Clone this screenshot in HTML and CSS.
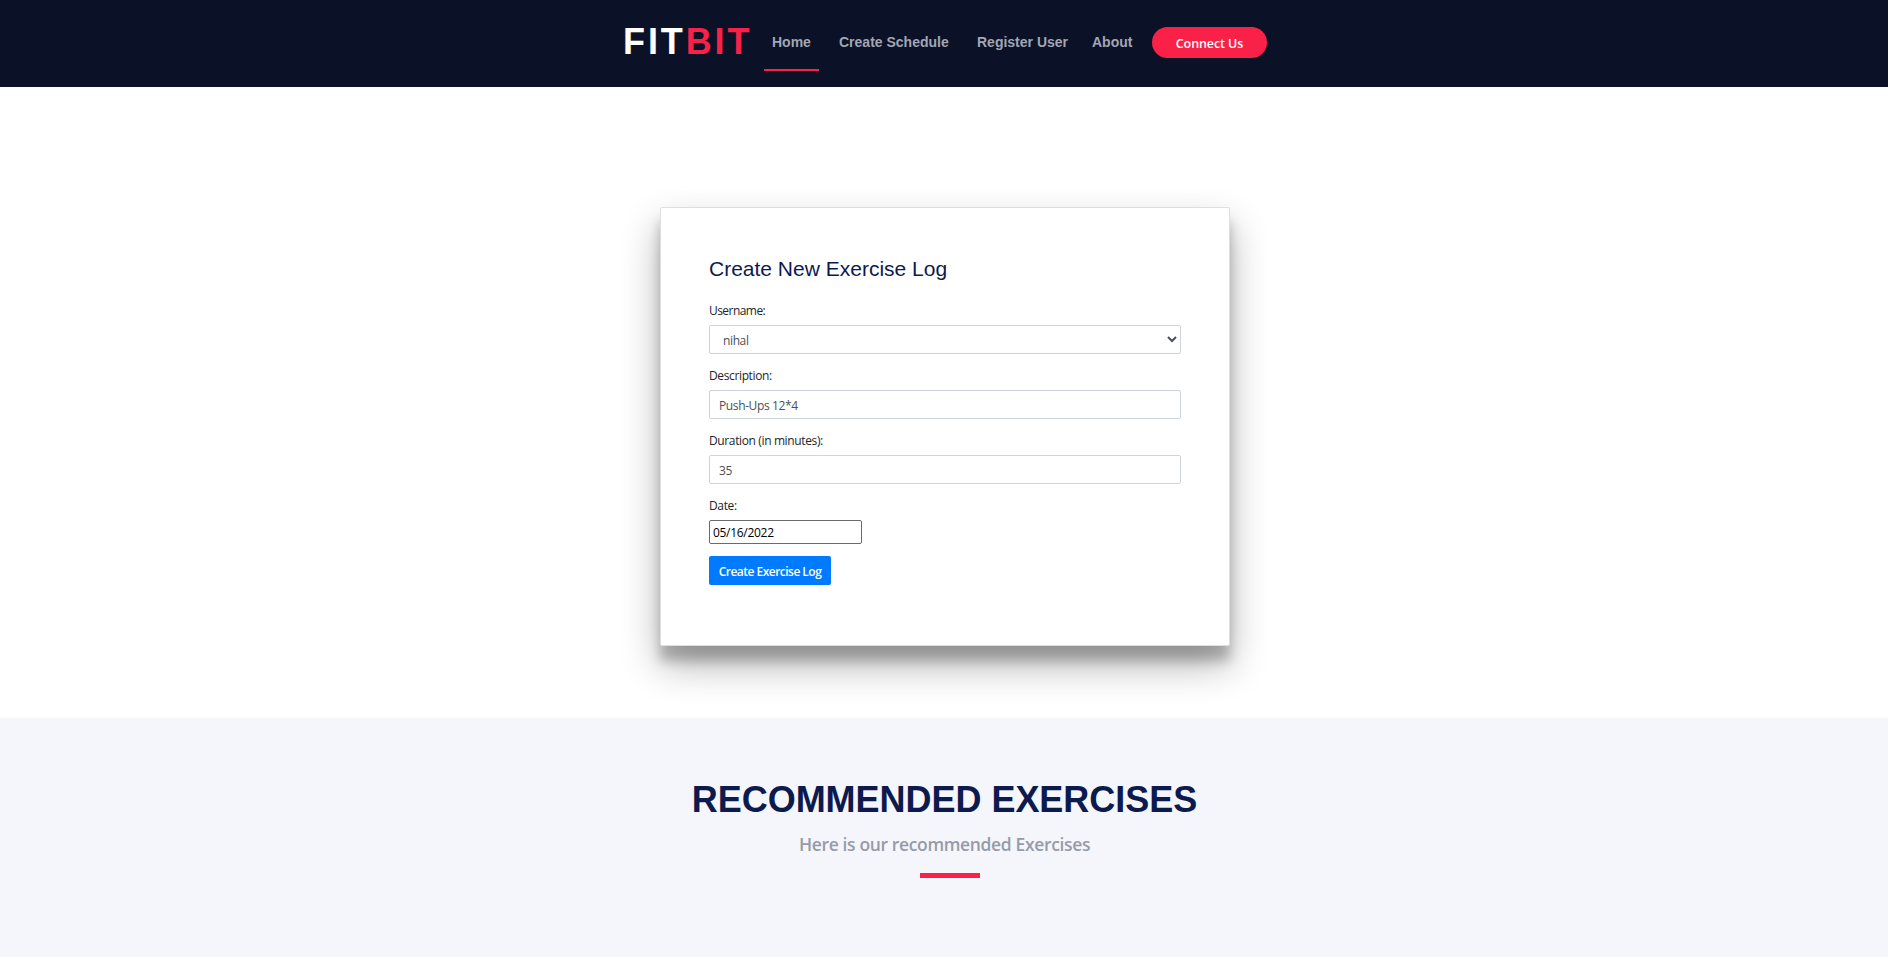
FILE: index.html
```
<!DOCTYPE html>
<html lang="en">
<head>
<meta charset="utf-8">
<title>Fitbit</title>
<link rel="stylesheet" href="styles.css">
</head>
<body>
<header class="header">
  <a class="logo">FIT<span class="logo-accent">BIT</span></a>
  <nav class="nav">
    <a class="nav-link active">Home</a>
    <a class="nav-link schedule">Create Schedule</a>
    <a class="nav-link register">Register User</a>
    <a class="nav-link about">About</a>
  </nav>
  <a class="connect">Connect Us</a>
</header>
<main class="main">
  <form class="card">
    <h3 class="card-title">Create New Exercise Log</h3>
    <div class="group">
      <label class="label label-user">Username:</label>
      <select class="control select"><option>nihal</option></select>
    </div>
    <div class="group">
      <label class="label">Description:</label>
      <input class="control" type="text" value="Push-Ups 12*4">
    </div>
    <div class="group">
      <label class="label">Duration (in minutes):</label>
      <input class="control" type="text" value="35">
    </div>
    <div class="group">
      <label class="label">Date:</label>
      <input class="date" type="text" value="05/16/2022">
    </div>
    <button class="submit" type="button">Create Exercise Log</button>
  </form>
</main>
<section class="recommended">
  <h2 class="section-title">RECOMMENDED EXERCISES</h2>
  <p class="section-sub">Here is our recommended Exercises</p>
  <div class="rule"></div>
</section>
</body>
</html>
```
FILE: styles.css
```
* { box-sizing: border-box; }
body {
  margin: 0;
  height: 957px;
  overflow: hidden;
  display: flex;
  flex-direction: column;
  background: #fff;
  color: #212529;
  font-family: "Open Sans", "Noto Sans", sans-serif;
  font-size: 12px;
}
.header {
  height: 87px;
  flex: none;
  display: flex;
  padding-left: 623px;
  background: #0b1126;
  font-family: "Liberation Sans", Arial, sans-serif;
  font-weight: 700;
}
.logo {
  width: 141px;
  padding-top: 21px;
  font-size: 36px;
  line-height: 41px;
  letter-spacing: 2.9px;
  color: #fff;
}
.logo-accent { color: #fa2148; }
.nav { display: flex; }
.nav-link {
  height: 71px;
  padding: 34px 8px 0;
  font-size: 14px;
  line-height: 16px;
  color: #a2a6b5;
  white-space: nowrap;
}
.nav-link.active { width: 55px; border-bottom: 2px solid #fa2148; }
.schedule { margin-left: 12px; width: 126px; }
.register { margin-left: 12px; width: 107px; }
.about { margin-left: 8px; width: 56px; }
.connect {
  width: 115px;
  height: 31px;
  margin: 27px 0 0 12px;
  border-radius: 16px;
  background: #fa2148;
  color: #fff;
  font: 600 12.5px/33px "Open Sans", sans-serif;
  letter-spacing: -.1px;
  text-align: center;
}
.main {
  height: 631px;
  flex: none;
  padding: 120px 0 0 660px;
}
.card {
  width: 570px;
  height: 439px;
  padding: 48px 48px 0;
  border: 1px solid #dfdfdf;
  border-radius: 2px;
  background: #fff;
  box-shadow: 0 19px 38px rgba(0, 0, 0, .3), 0 15px 12px rgba(0, 0, 0, .22);
}
.card-title {
  margin: 0 0 16px;
  font: 400 21px/26px "Liberation Sans", Arial, sans-serif;
  color: #0d1a50;
}
.group { height: 65px; }
.label {
  display: block;
  height: 27px;
  padding-top: 4px;
  line-height: 18px;
  letter-spacing: -.37px;
}
.label-user { letter-spacing: -.55px; }
.control, .date, .submit { display: block; font: inherit; }
.control {
  width: 472px;
  height: 29px;
  padding: 2px 8px 0 9px;
  border: 1px solid #ced4da;
  border-radius: 2px;
  background: #fff;
  color: #495057;
  letter-spacing: -.38px;
}
.select { padding-right: 0; }
.date {
  width: 153px;
  height: 24px;
  padding: 2px 2px 1px 3px;
  border: 1px solid #6b6b6b;
  border-radius: 2px;
  color: #000;
  letter-spacing: -.3px;
}
.submit {
  width: 122px;
  height: 29px;
  margin-top: -2px;
  padding: 2px 0 0;
  border: 0;
  border-radius: 2px;
  background: #007bff;
  color: #fff;
  font-weight: 600;
  letter-spacing: -.52px;
  white-space: nowrap;
}
.recommended {
  flex: 1;
  padding-top: 61px;
  background: #f5f6fc;
  text-align: center;
}
.section-title {
  margin: 0;
  padding-left: 1px;
  font: 700 36px/42px "Liberation Sans", Arial, sans-serif;
  letter-spacing: -.03px;
  color: #0c1a4d;
}
.section-sub {
  margin: 10px 0 0;
  padding-left: 1px;
  font-size: 17.5px;
  line-height: 26px;
  font-weight: 600;
  letter-spacing: -.36px;
  color: #979ba8;
}
.rule {
  width: 60px;
  height: 5px;
  margin: 16px 0 0 920px;
  background: #fa2148;
}
```
